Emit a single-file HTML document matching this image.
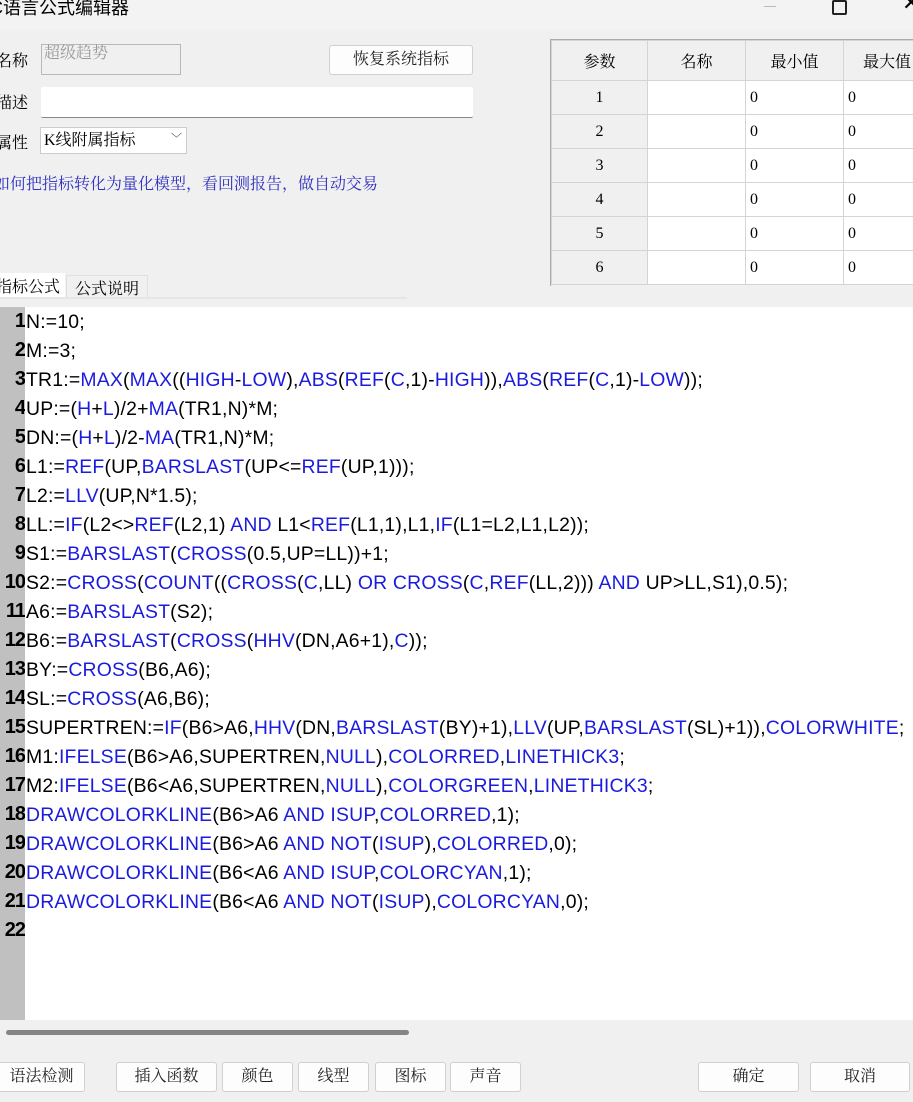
<!DOCTYPE html>
<html><head><meta charset="utf-8"><style>
*{margin:0;padding:0;box-sizing:border-box}
body{width:913px;height:1102px;overflow:hidden;background:#f0f0f0;font-family:"Liberation Serif","Noto Serif CJK SC",serif;position:relative;color:#000}
.abs{position:absolute}
.title{left:0;top:0;width:913px;height:30px;background:#f3f3f3;font-family:"Liberation Sans","Noto Sans CJK SC",sans-serif;font-size:18px;line-height:18px}
.lbl{font-size:16px;left:0}
.btn{position:absolute;background:#fdfdfd;border:1px solid #d0d0d0;border-radius:3px;font-size:16px;text-align:center;color:#222;white-space:nowrap}
table{border-collapse:collapse;font-size:16px}
td{border:1px solid #d4d4d4;height:34px;background:#fff;padding-left:4px}
td.h{background:#f0f0f0;text-align:center;padding:0}
.code{left:0;top:307px;width:913px;height:713px;background:#fff}
.gut{left:0;top:307px;width:25px;height:713px;background:#c0c0c0}
.ln{position:absolute;left:0;width:25px;text-align:right;overflow:hidden;white-space:nowrap;font-family:"Liberation Sans",sans-serif;font-weight:bold;font-size:20px;direction:rtl;letter-spacing:-1px}
.cl{position:absolute;left:26px;white-space:nowrap;font-family:"Liberation Sans",sans-serif;font-size:19.4px;letter-spacing:0.2px}
b{font-weight:normal;color:#1b1bdd}
</style></head><body>
<div class="abs title"><span style="position:absolute;left:-10px;top:-1px">C语言公式编辑器</span>
<div class="abs" style="left:764px;top:6px;width:12px;height:1px;background:#bbb"></div>
<div class="abs" style="left:832px;top:0px;width:15px;height:15px;border:2px solid #222;border-radius:2px"></div>
<div class="abs" style="left:902px;top:-6px;font-size:22px">✕</div>
</div>
<div class="abs lbl" style="top:48px;left:-4px">名称</div>
<div class="abs" style="left:41px;top:44px;width:140px;height:31px;border:1px solid #b8b8b8;font-size:16px;color:#999;padding-left:2px;line-height:18px">超级趋势</div>
<div class="btn" style="left:329px;top:45px;width:144px;height:30px;line-height:28px">恢复系统指标</div>
<div class="abs lbl" style="top:90px;left:-4px">描述</div>
<div class="abs" style="left:41px;top:87px;width:432px;height:31px;background:#fff;border-bottom:1px solid #888;border-radius:2px"></div>
<div class="abs lbl" style="top:130px;left:-4px">属性</div>
<div class="abs" style="left:40px;top:127px;width:147px;height:27px;background:#fff;border:1px solid #ccc;font-size:16px;line-height:25px;padding-left:3px">K线附属指标<span style="position:absolute;left:130px;top:-1px;font-size:11px;color:#333">﹀</span></div>
<div class="abs" style="left:-6px;top:171px;font-size:16px;color:#3030c0">如何把指标转化为量化模型，看回测报告，做自动交易</div>
<div class="abs" style="left:550px;top:39px;width:363px;height:247px;border-left:1px solid #aaa;border-top:1px solid #aaa;background:#f0f0f0">
<table style="width:380px"><tr><td class="h" style="width:96px;height:40px">参数</td><td class="h" style="width:98px">名称</td><td class="h" style="width:98px">最小值</td><td class="h">最大值</td></tr>
<tr><td class="h">1</td><td></td><td>0</td><td>0</td></tr>
<tr><td class="h">2</td><td></td><td>0</td><td>0</td></tr>
<tr><td class="h">3</td><td></td><td>0</td><td>0</td></tr>
<tr><td class="h">4</td><td></td><td>0</td><td>0</td></tr>
<tr><td class="h">5</td><td></td><td>0</td><td>0</td></tr>
<tr><td class="h">6</td><td></td><td>0</td><td>0</td></tr></table></div>
<div class="abs" style="left:-4px;top:273px;width:69px;height:25px;background:#fff;font-size:16px;padding-top:1px">指标公式</div>
<div class="abs" style="left:66px;top:275px;width:82px;height:23px;border:1px solid #e0e0e0;font-size:16px;padding-left:8px">公式说明</div>
<div class="abs" style="left:0;top:297px;width:407px;height:2px;background:#e6e6e6"></div>
<div class="abs code"></div>
<div class="abs gut"></div>
<div class="abs" style="left:0;top:310px">
<div class="ln" style="top:0">1</div><div class="cl" style="top:1px">N:=10;</div>
<div class="ln" style="top:29px">2</div><div class="cl" style="top:30px">M:=3;</div>
<div class="ln" style="top:58px">3</div><div class="cl" style="top:59px">TR1:=<b>MAX</b>(<b>MAX</b>((<b>HIGH</b>-<b>LOW</b>),<b>ABS</b>(<b>REF</b>(<b>C</b>,1)-<b>HIGH</b>)),<b>ABS</b>(<b>REF</b>(<b>C</b>,1)-<b>LOW</b>));</div>
<div class="ln" style="top:87px">4</div><div class="cl" style="top:88px">UP:=(<b>H</b>+<b>L</b>)/2+<b>MA</b>(TR1,N)*M;</div>
<div class="ln" style="top:116px">5</div><div class="cl" style="top:117px">DN:=(<b>H</b>+<b>L</b>)/2-<b>MA</b>(TR1,N)*M;</div>
<div class="ln" style="top:145px">6</div><div class="cl" style="top:146px">L1:=<b>REF</b>(UP,<b>BARSLAST</b>(UP&lt;=<b>REF</b>(UP,1)));</div>
<div class="ln" style="top:174px">7</div><div class="cl" style="top:175px">L2:=<b>LLV</b>(UP,N*1.5);</div>
<div class="ln" style="top:203px">8</div><div class="cl" style="top:204px">LL:=<b>IF</b>(L2&lt;&gt;<b>REF</b>(L2,1) <b>AND</b> L1&lt;<b>REF</b>(L1,1),L1,<b>IF</b>(L1=L2,L1,L2));</div>
<div class="ln" style="top:232px">9</div><div class="cl" style="top:233px">S1:=<b>BARSLAST</b>(<b>CROSS</b>(0.5,UP=LL))+1;</div>
<div class="ln" style="top:261px">10</div><div class="cl" style="top:262px">S2:=<b>CROSS</b>(<b>COUNT</b>((<b>CROSS</b>(<b>C</b>,LL) <b>OR</b> <b>CROSS</b>(<b>C</b>,<b>REF</b>(LL,2))) <b>AND</b> UP&gt;LL,S1),0.5);</div>
<div class="ln" style="top:290px">11</div><div class="cl" style="top:291px">A6:=<b>BARSLAST</b>(S2);</div>
<div class="ln" style="top:319px">12</div><div class="cl" style="top:320px">B6:=<b>BARSLAST</b>(<b>CROSS</b>(<b>HHV</b>(DN,A6+1),<b>C</b>));</div>
<div class="ln" style="top:348px">13</div><div class="cl" style="top:349px">BY:=<b>CROSS</b>(B6,A6);</div>
<div class="ln" style="top:377px">14</div><div class="cl" style="top:378px">SL:=<b>CROSS</b>(A6,B6);</div>
<div class="ln" style="top:406px">15</div><div class="cl" style="top:407px">SUPERTREN:=<b>IF</b>(B6&gt;A6,<b>HHV</b>(DN,<b>BARSLAST</b>(BY)+1),<b>LLV</b>(UP,<b>BARSLAST</b>(SL)+1)),<b>COLORWHITE</b>;</div>
<div class="ln" style="top:435px">16</div><div class="cl" style="top:436px">M1:<b>IFELSE</b>(B6&gt;A6,SUPERTREN,<b>NULL</b>),<b>COLORRED</b>,<b>LINETHICK3</b>;</div>
<div class="ln" style="top:464px">17</div><div class="cl" style="top:465px">M2:<b>IFELSE</b>(B6&lt;A6,SUPERTREN,<b>NULL</b>),<b>COLORGREEN</b>,<b>LINETHICK3</b>;</div>
<div class="ln" style="top:493px">18</div><div class="cl" style="top:494px"><b>DRAWCOLORKLINE</b>(B6&gt;A6 <b>AND</b> <b>ISUP</b>,<b>COLORRED</b>,1);</div>
<div class="ln" style="top:522px">19</div><div class="cl" style="top:523px"><b>DRAWCOLORKLINE</b>(B6&gt;A6 <b>AND</b> <b>NOT</b>(<b>ISUP</b>),<b>COLORRED</b>,0);</div>
<div class="ln" style="top:551px">20</div><div class="cl" style="top:552px"><b>DRAWCOLORKLINE</b>(B6&lt;A6 <b>AND</b> <b>ISUP</b>,<b>COLORCYAN</b>,1);</div>
<div class="ln" style="top:580px">21</div><div class="cl" style="top:581px"><b>DRAWCOLORKLINE</b>(B6&lt;A6 <b>AND</b> <b>NOT</b>(<b>ISUP</b>),<b>COLORCYAN</b>,0);</div>
<div class="ln" style="top:609px">22</div>
</div>
<div class="abs" style="left:6px;top:1030px;width:403px;height:5px;background:#858585;border-radius:3px"></div>
<div class="btn" style="left:-6px;top:1062px;width:91px;height:30px;line-height:28px;padding-left:4px">语法检测</div>
<div class="btn" style="left:116px;top:1062px;width:101px;height:30px;line-height:28px">插入函数</div>
<div class="btn" style="left:222px;top:1062px;width:71px;height:30px;line-height:28px">颜色</div>
<div class="btn" style="left:298px;top:1062px;width:71px;height:30px;line-height:28px">线型</div>
<div class="btn" style="left:375px;top:1062px;width:71px;height:30px;line-height:28px">图标</div>
<div class="btn" style="left:450px;top:1062px;width:71px;height:30px;line-height:28px">声音</div>
<div class="btn" style="left:698px;top:1062px;width:101px;height:30px;line-height:28px">确定</div>
<div class="btn" style="left:810px;top:1062px;width:100px;height:30px;line-height:28px">取消</div>
</body></html>
